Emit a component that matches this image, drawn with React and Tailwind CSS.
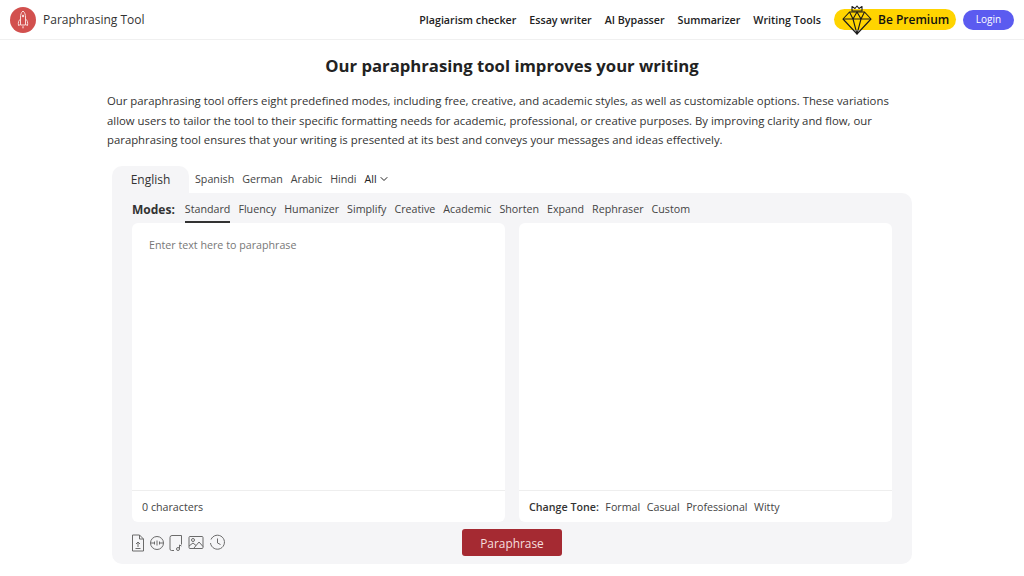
import React from "react";
import { ChevronDown } from "lucide-react";

const navLinks = ["Plagiarism checker", "Essay writer", "AI Bypasser", "Summarizer", "Writing Tools"];
const langs = ["Spanish", "German", "Arabic", "Hindi"];
const modes = ["Fluency", "Humanizer", "Simplify", "Creative", "Academic", "Shorten", "Expand", "Rephraser", "Custom"];
const tones = ["Formal", "Casual", "Professional", "Witty"];

const Logo = () => (
  <svg width="26" height="26" viewBox="0 0 26 26" fill="none">
    <circle cx="13" cy="13" r="13" fill="#d2504e" />
    <path d="M13 4c2 1.500 2.500 4 2.500 6v8h-5v-8c0-2 .5-4.500 2.500-6z" stroke="#f8dcda" strokeWidth="1" />
    <path d="M10.500 12c-2 1.500-2.500 3.500-2 6.500l2-1M15.500 12c2 1.500 2.500 3.500 2 6.500l-2-1" stroke="#f8dcda" strokeWidth="1" />
    <circle cx="13" cy="9" r="1.2" fill="#f8dcda" />
    <path d="M12 19.500l1 2.500 1-2.500z" fill="#f8dcda" />
  </svg>
);

const Diamond = () => (
  <svg width="30" height="31" viewBox="0 0 30 31" fill="none" stroke="#1a1a1a" strokeWidth="1.1" strokeLinejoin="round">
    <path d="M10 7V2.500l3 2 2-2.500 2 2.500 3-2V7z" />
    <path d="M7.500 8h15L29 15 15 30 1 15z" />
    <path d="M1 15h28M7.500 8L11 15l4 15 4-15 3.500-7M11 15l4-7 4 7" />
  </svg>
);

const ToolIcons = () => (
  <div className="flex items-center gap-[3px] text-[#6b6b6b]">
    <svg width="16" height="18" viewBox="0 0 16 18" fill="none" stroke="currentColor" strokeWidth="1">
      <path d="M2.500 1h7l4 4v12h-11zM9.500 1v4h4" />
      <path d="M8 13V8M6 10l2-2 2 2M5.500 14.500h5" />
    </svg>
    <svg width="16" height="16" viewBox="0 0 16 16" fill="none" stroke="currentColor" strokeWidth="1">
      <circle cx="8" cy="8" r="6.5" />
      <path d="M2 8h3.500M10.500 8H14M5.500 6.500v3M8 5.500v5M10.500 6.500v3" />
    </svg>
    <svg width="16" height="18" viewBox="0 0 16 18" fill="none" stroke="currentColor" strokeWidth="1">
      <path d="M6 16.500H3.500a1.500 1.500 0 0 1-1.500-1.500V3.500A2 2 0 0 1 4 1.500h9.500v9" />
      <circle cx="10" cy="15" r="1.5" />
      <path d="M11.500 15v-4l2 1" />
    </svg>
    <svg width="16" height="15" viewBox="0 0 16 15" fill="none" stroke="currentColor" strokeWidth="1" className="ml-[1px]">
      <rect x="1" y="1.5" width="14" height="12" rx="1" />
      <circle cx="5" cy="5" r="1.5" />
      <path d="M1 11l4-3 3 2.500M6 13l5-6 4 4.500" />
    </svg>
    <svg width="17" height="17" viewBox="0 0 17 17" fill="none" stroke="currentColor" strokeWidth="1" className="ml-[2px]">
      <path d="M2 5.500A7 7 0 1 1 1.500 9" />
      <path d="M8.500 4.500v4.500l3 1.500" />
    </svg>
  </div>
);

export default function App() {
  return (
    <div className="min-h-screen bg-white font-['Open_Sans',sans-serif] text-[#333]">
      {/* Header */}
      <header className="h-[40px] flex items-center justify-between px-[10px] border-b border-[#f0f0f0]">
        <div className="flex items-center gap-[7px]">
          <Logo />
          <span className="text-[12px] text-[#333]">Paraphrasing Tool</span>
        </div>
        <div className="flex items-center">
          <nav className="flex items-center gap-[13px] pt-[1px] text-[10.7px] font-semibold text-[#222]">
            {navLinks.map((n) => (
              <a key={n}>{n}</a>
            ))}
          </nav>
          <div className="relative ml-[13px] h-[21px] w-[122px] rounded-full bg-[#ffd400] flex items-center pl-[44px] pt-[1px] text-[12px] font-semibold text-[#111]">
            <span className="absolute left-[8px] top-[-5px]">
              <Diamond />
            </span>
            Be Premium
          </div>
          <button className="ml-[7px] h-[20px] w-[51px] rounded-full bg-[#5b5bf0] text-white text-[10px]">Login</button>
        </div>
      </header>

      <main className="w-[800px] mx-auto">
        <h1 className="mt-[14px] text-center text-[16.7px] leading-[24px] font-bold text-[#222]">
          Our paraphrasing tool improves your writing
        </h1>
        <p className="mt-[13px] ml-[-5px] w-[800px] text-[11.35px] leading-[19.5px] text-[#333]">
          Our paraphrasing tool offers eight predefined modes, including free, creative, and academic styles, as well as customizable options. These variations allow users to tailor the tool to their specific formatting needs for academic, professional, or creative purposes. By improving clarity and flow, our paraphrasing tool ensures that your writing is presented at its best and conveys your messages and ideas effectively.
        </p>

        {/* Language tabs */}
        <div className="mt-[16px] flex items-center text-[10.7px]">
          <div className="w-[77px] h-[27px] pt-[2px] rounded-t-[10px] bg-[#f5f5f7] flex items-center justify-center text-[12px]">English</div>
          <div className="flex items-center gap-[8px] ml-[6px] text-[#444]">
            {langs.map((l) => (
              <span key={l}>{l}</span>
            ))}
            <span className="flex items-center gap-[1px] text-[#222]">
              All <ChevronDown size={12} strokeWidth={2} />
            </span>
          </div>
        </div>

        {/* Panel */}
        <section className="w-[800px] h-[371px] rounded-b-[10px] rounded-tr-[10px] bg-[#f5f5f7] px-[20px]">
          <div className="flex items-center h-[30px] pt-[4px] text-[10.7px]">
            <span className="font-bold text-[12px] text-[#333] mr-[10px]">Modes:</span>
            <span className="h-full pt-[2px] flex items-center border-b-2 border-[#333] text-[#444] mr-[8px]">Standard</span>
            <div className="flex items-center gap-[8px] text-[#444]">
              {modes.map((m) => (
                <span key={m}>{m}</span>
              ))}
            </div>
          </div>

          <div className="flex gap-[14px]">
            <div className="w-[373px] h-[299px] bg-white rounded-[6px] flex flex-col">
              <div className="flex-1 px-[17px] pt-[14px] text-[10.7px] leading-[17px] text-[#777]">Enter text here to paraphrase</div>
              <div className="h-[32px] pt-[3px] border-t border-[#eeeeee] flex items-center px-[10px] text-[10.7px] text-[#444]">0 characters</div>
            </div>
            <div className="w-[373px] h-[299px] bg-white rounded-[6px] flex flex-col">
              <div className="flex-1" />
              <div className="h-[32px] pt-[3px] border-t border-[#eeeeee] flex items-center px-[10px] text-[10.7px] text-[#444] gap-[6.5px]">
                <span className="font-semibold text-[#333]">Change Tone:</span>
                {tones.map((t) => (
                  <span key={t}>{t}</span>
                ))}
              </div>
            </div>
          </div>

          <div className="relative mt-[7px] h-[27px] flex items-center justify-center">
            <div className="absolute left-[-2px] top-[5px]">
              <ToolIcons />
            </div>
            <button className="w-[100px] h-[27px] pt-[3px] rounded-[3px] bg-[#a52a32] text-[#f5dede] text-[11.9px]">Paraphrase</button>
          </div>
        </section>
      </main>
    </div>
  );
}
